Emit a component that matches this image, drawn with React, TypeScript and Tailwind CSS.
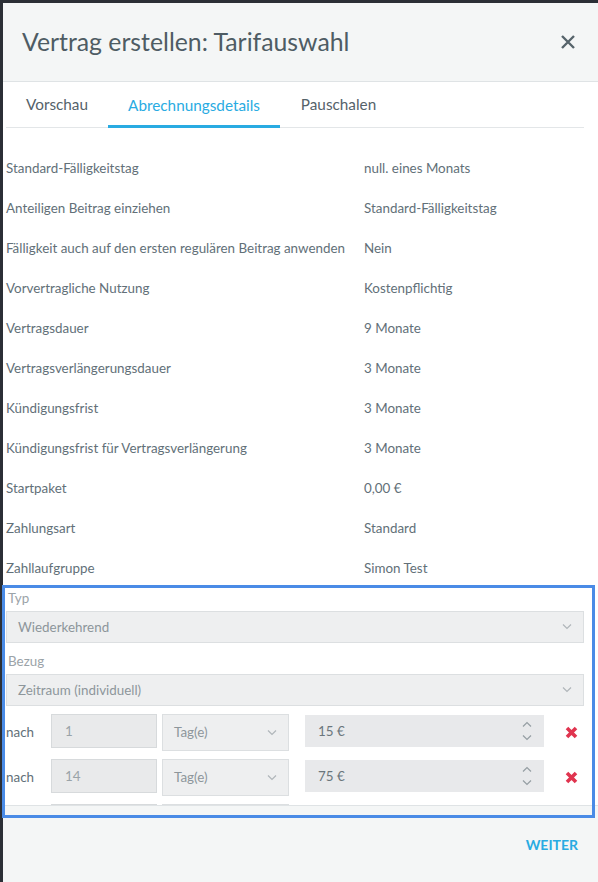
import React from 'react'

const details = [
	{ label: 'Standard-Fälligkeitstag', value: 'null. eines Monats' },
	{ label: 'Anteiligen Beitrag einziehen', value: 'Standard-Fälligkeitstag' },
	{ label: 'Fälligkeit auch auf den ersten regulären Beitrag anwenden', value: 'Nein' },
	{ label: 'Vorvertragliche Nutzung', value: 'Kostenpflichtig' },
	{ label: 'Vertragsdauer', value: '9 Monate' },
	{ label: 'Vertragsverlängerungsdauer', value: '3 Monate' },
	{ label: 'Kündigungsfrist', value: '3 Monate' },
	{ label: 'Kündigungsfrist für Vertragsverlängerung', value: '3 Monate' },
	{ label: 'Startpaket', value: '0,00 €' },
	{ label: 'Zahlungsart', value: 'Standard' },
	{ label: 'Zahllaufgruppe', value: 'Simon Test' },
]

// third row is scrolled out of view, only its top edge shows
const steps = [
	{ count: '1', amount: '15 €', label: 'nach', unit: 'Tag(e)' },
	{ count: '14', amount: '75 €', label: 'nach', unit: 'Tag(e)' },
	{ count: '', amount: '', label: '', unit: '' },
]

const Chevron: React.FC<{ up?: boolean; className?: string }> = ({ up, className }) => (
	<svg width="10" height="6" viewBox="0 0 10 6" className={className} fill="none">
		<path
			d={up ? 'M1 5.5 L5 1.5 L9 5.5' : 'M1 0.5 L5 4.5 L9 0.5'}
			stroke="currentColor"
			strokeWidth="1.2"
		/>
	</svg>
)

const Select: React.FC<{ text: string; className?: string }> = ({ text, className }) => (
	<div
		className={
			'flex items-center justify-between bg-[#eeeff0] border border-[#dcdfe1] text-[#8d969b] ' +
			(className ?? '')
		}
	>
		<span>{text}</span>
		<Chevron className="text-[#b0b6ba]" />
	</div>
)

const App: React.FC = () => {
	return (
		<div
			className="relative w-[598px] h-[882px] bg-[#2b2f36] pt-[3px] pl-[3px] overflow-hidden text-[13.4px] text-[#627078]"
			style={{ fontFamily: 'Lato, "Open Sans", sans-serif' }}
		>
			<div className="flex flex-col h-full bg-white">
				{/* header */}
				<div className="h-[79px] shrink-0 bg-[#f4f6f6] border-b border-[#dfe3e5] flex items-center justify-between pl-[19px] pr-[22px]">
					<h1 className="text-[24.8px] text-[#4e5c64] leading-none">Vertrag erstellen: Tarifauswahl</h1>
					<svg width="16" height="16" viewBox="0 0 16 16" className="text-[#56646b]">
						<path d="M2 2 L14 14 M14 2 L2 14" stroke="currentColor" strokeWidth="2.4" />
					</svg>
				</div>

				{/* body */}
				<div className="flex-1 overflow-hidden pl-[3px]">
					<div className="w-[578px]">
						<div className="h-[46px] flex border-b border-[#e3e6e8] text-[15.3px]">
							<div className="w-[102px] flex items-center justify-center text-[#55626a]">Vorschau</div>
							<div className="w-[172px] flex items-center justify-center text-[#29abe2] border-b-[3px] border-[#29abe2] -mb-px pt-[3px]">
								Abrechnungsdetails
							</div>
							<div className="w-[117px] flex items-center justify-center text-[#55626a]">Pauschalen</div>
						</div>

						<div className="pt-[20px]">
							{details.map((row, index) => (
								<div key={index} className="h-10 flex items-center">
									<div className="w-[358px]">{row.label}</div>
									<div>{row.value}</div>
								</div>
							))}
						</div>

						<div className="h-[23px] flex items-end pb-[4px] leading-[18px] pl-[2px] text-[#9ba3a8]">Typ</div>
						<Select text="Wiederkehrend" className="h-[32px] pl-[11px] pr-[11px]" />
						<div className="h-[31px] flex items-end pb-[4px] leading-[18px] pl-[2px] text-[#9ba3a8]">Bezug</div>
						<Select text="Zeitraum (individuell)" className="h-[32px] pl-[11px] pr-[11px]" />

						<div className="mt-[8px] flex flex-col gap-[9px]">
							{steps.map((step, index) => (
								<div key={index} className="flex items-start h-[36px]">
									<div className="w-[45px] h-[36px] flex items-center">{step.label}</div>
									<div className="w-[106px] h-[34px] flex items-center pl-[13px] bg-[#e9eaeb] border border-[#d7dadc] text-[#9aa3a8]">
										{step.count}
									</div>
									<Select text={step.unit} className="ml-[5px] w-[127px] h-[37px] pl-[11px] pr-[11px]" />
									<div className="ml-[16px] mt-[1px] w-[239px] h-[32px] flex items-center justify-between pl-[13px] pr-[12px] bg-[#e8e9eb] text-[#6b767c]">
										<span>{step.amount}</span>
										<div className="flex flex-col gap-[8px] text-[#959ea3]">
											<Chevron up />
											<Chevron />
										</div>
									</div>
									<div className="ml-[21px] h-[36px] flex items-center">
										<svg width="13" height="13" viewBox="0 0 13 13">
											<path d="M2 2 L11 11 M11 2 L2 11" stroke="#e0344f" strokeWidth="3.6" />
										</svg>
									</div>
								</div>
							))}
						</div>
					</div>
				</div>

				{/* footer */}
				<div className="h-[77px] shrink-0 bg-[#f4f6f6] border-t border-[#dfe3e5] flex items-center justify-end pr-[20px]">
					<span className="text-[14px] font-bold text-[#29abe2]">WEITER</span>
				</div>
			</div>

			{/* highlight annotation */}
			<div className="absolute left-[2px] top-[585px] w-[593px] h-[233px] border-[3px] border-[#4a8be6] pointer-events-none" />
		</div>
	)
}

export default App
